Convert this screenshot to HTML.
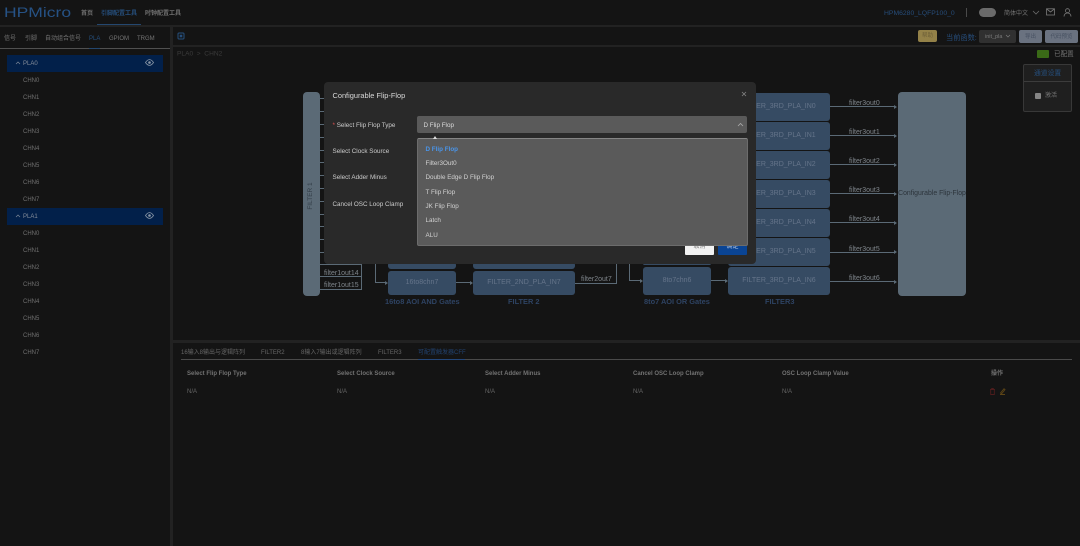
<!DOCTYPE html>
<html><head><meta charset="utf-8">
<style>
html,body{margin:0;padding:0;background:#141414;width:1080px;height:546px;overflow:hidden}
#r{position:relative;width:1080px;height:546px;overflow:hidden;background:#141414;font-family:"Liberation Sans","Noto Sans CJK SC",sans-serif;filter:blur(.35px)}
#r div,#r span.a{position:absolute;white-space:nowrap}
.t{line-height:10px;height:10px;margin-top:1px}
.g{color:#757575;font-size:6px}
.bar{background:#222}
.tree{left:23px;color:#707070;font-size:6px}
.blue{background:#364b63;border-radius:3px;color:#65748a;font-size:7px;text-align:center}
.gr{background:#5b6a76;border-radius:4px}
.ln{background:#5b6a76}
.out{color:#7e848a;font-size:7px;line-height:9px}
.ar{width:0;height:0;border-left:3px solid #5b6a76;border-top:2px solid transparent;border-bottom:2px solid transparent}
.hd{color:#727272;font-size:6px;font-weight:bold;top:368px}
.na{color:#666;font-size:6px;top:386px}
.it{left:425.5px;color:#d2d2d2;font-size:6.3px}
.lb{left:332.5px;color:#cccccc;font-size:6.3px}
.cap{color:#2e4363;font-size:7.4px;font-weight:bold}
</style></head><body><div id="r">
<!-- separators -->
<div class="bar" style="left:0;top:25px;width:1080px;height:2px"></div>
<div class="bar" style="left:170px;top:27px;width:3px;height:519px"></div>
<div class="bar" style="left:173px;top:45px;width:907px;height:2px"></div>
<div class="bar" style="left:173px;top:340px;width:907px;height:3px"></div>

<!-- header -->
<div style="left:4px;top:5px;font-size:14px;line-height:15px;height:15px;color:#265285;transform:scaleX(1.25);transform-origin:left center">HPMicro</div>
<div class="t g" style="left:81px;top:8px;font-weight:bold;color:#717171">首页</div>
<div class="t" style="left:101px;top:8px;font-size:6px;font-weight:bold;color:#264f7d">引脚配置工具</div>
<div style="left:97px;top:24px;width:44px;height:1px;background:#24476f"></div>
<div class="t g" style="left:145px;top:8px;font-weight:bold;color:#717171">时钟配置工具</div>
<div class="t" style="left:884px;top:7.5px;font-size:6.8px;color:#264c79">HPM6280_LQFP100_0</div>
<div style="left:966px;top:8px;width:1px;height:9px;background:#4a4a4a"></div>
<div style="left:979px;top:8px;width:17px;height:9px;border-radius:5px;background:#6a6a6a"></div>
<div class="t g" style="left:1004px;top:7.5px">简体中文</div>
<svg style="position:absolute;left:1032px;top:10px" width="8" height="6" viewBox="0 0 8 6"><path d="M1 1l3 3 3-3" fill="none" stroke="#6a6a6a" stroke-width=".8"/></svg>
<svg style="position:absolute;left:1046px;top:8px" width="9" height="8" viewBox="0 0 9 8"><rect x=".5" y=".8" width="8" height="6.2" fill="none" stroke="#7a7a7a" stroke-width=".8"/><path d="M.7 1l3.8 3 3.8-3" fill="none" stroke="#7a7a7a" stroke-width=".8"/></svg>
<svg style="position:absolute;left:1063px;top:8px" width="9" height="9" viewBox="0 0 9 9"><circle cx="4.5" cy="2.7" r="2" fill="none" stroke="#7a7a7a" stroke-width=".8"/><path d="M1 8.5c.3-2.5 1.6-3.5 3.5-3.5s3.2 1 3.5 3.5" fill="none" stroke="#7a7a7a" stroke-width=".8"/></svg>

<!-- left tabs -->
<div class="t g" style="left:4px;top:33px">信号</div>
<div class="t g" style="left:25px;top:33px">引脚</div>
<div class="t g" style="left:45px;top:33px">自动组合信号</div>
<div class="t" style="left:89px;top:33px;font-size:6px;color:#264f7d">PLA</div>
<div class="t g" style="left:109px;top:33px">GPIOM</div>
<div class="t g" style="left:137px;top:33px">TRGM</div>
<div style="left:0;top:48px;width:170px;height:1px;background:#505050"></div>
<div style="left:89px;top:48px;width:11px;height:1px;background:#24476f"></div>

<!-- tree -->
<div style="left:7px;top:55px;width:156px;height:17px;background:#02204a"></div>
<div class="t tree" style="top:58px;color:#858d9a">PLA0</div>
<svg style="position:absolute;left:15px;top:61px" width="6" height="4" viewBox="0 0 6 4"><path d="M1 3l2-2 2 2" fill="none" stroke="#7c8798" stroke-width=".7"/></svg>
<svg style="position:absolute;left:145px;top:59px" width="9" height="7" viewBox="0 0 9 7"><path d="M.5 3.5C2 1.2 3.2.6 4.5.6S7 1.2 8.5 3.5C7 5.8 5.8 6.4 4.5 6.4S2 5.8.5 3.5z" fill="none" stroke="#8b98a8" stroke-width=".8"/><circle cx="4.5" cy="3.5" r="1.3" fill="#8b98a8"/></svg>
<div class="t tree" style="top:75px">CHN0</div>
<div class="t tree" style="top:92px">CHN1</div>
<div class="t tree" style="top:109px">CHN2</div>
<div class="t tree" style="top:126px">CHN3</div>
<div class="t tree" style="top:143px">CHN4</div>
<div class="t tree" style="top:160px">CHN5</div>
<div class="t tree" style="top:177px">CHN6</div>
<div class="t tree" style="top:194px">CHN7</div>
<div style="left:7px;top:208px;width:156px;height:17px;background:#02204a"></div>
<div class="t tree" style="top:211px;color:#858d9a">PLA1</div>
<svg style="position:absolute;left:15px;top:214px" width="6" height="4" viewBox="0 0 6 4"><path d="M1 3l2-2 2 2" fill="none" stroke="#7c8798" stroke-width=".7"/></svg>
<svg style="position:absolute;left:145px;top:212px" width="9" height="7" viewBox="0 0 9 7"><path d="M.5 3.5C2 1.2 3.2.6 4.5.6S7 1.2 8.5 3.5C7 5.8 5.8 6.4 4.5 6.4S2 5.8.5 3.5z" fill="none" stroke="#8b98a8" stroke-width=".8"/><circle cx="4.5" cy="3.5" r="1.3" fill="#8b98a8"/></svg>
<div class="t tree" style="top:228px">CHN0</div>
<div class="t tree" style="top:245px">CHN1</div>
<div class="t tree" style="top:262px">CHN2</div>
<div class="t tree" style="top:279px">CHN3</div>
<div class="t tree" style="top:296px">CHN4</div>
<div class="t tree" style="top:313px">CHN5</div>
<div class="t tree" style="top:330px">CHN6</div>
<div class="t tree" style="top:347px">CHN7</div>

<!-- toolbar -->
<svg style="position:absolute;left:177px;top:32px" width="8" height="8" viewBox="0 0 8 8"><rect x="1" y="1" width="6" height="6" rx="1" fill="none" stroke="#264f7d"/><rect x="2.7" y="2.7" width="2.6" height="2.6" fill="#264f7d"/></svg>
<div style="left:918px;top:30px;width:19px;height:12px;border-radius:2px;background:#938148;color:#6e6038;font-size:5.5px;line-height:13px;text-align:center">帮助</div>
<div class="t" style="left:946px;top:31.5px;font-size:7.2px;color:#264c79">当前函数:</div>
<div style="left:979px;top:30px;width:37px;height:13px;border-radius:2px;background:#303030;color:#7a7a7a;font-size:5.5px;line-height:14px;text-indent:6px">init_pla</div>
<svg style="position:absolute;left:1005px;top:34px" width="6" height="4" viewBox="0 0 6 4"><path d="M1 1l2 2 2-2" fill="none" stroke="#7a7a7a" stroke-width=".7"/></svg>
<div style="left:1019px;top:30px;width:23px;height:13px;border-radius:2px;background:#6a7280;color:#465060;font-size:5.5px;line-height:14px;text-align:center">导出</div>
<div style="left:1045px;top:30px;width:33px;height:13px;border-radius:2px;background:#6a7280;color:#465060;font-size:5.5px;line-height:14px;text-align:center">代码预览</div>

<div class="t" style="left:177px;top:49px;margin-top:0;font-size:6.6px;color:#3b3b3b;transform:translateY(0.5px)">PLA0 &nbsp;&gt;&nbsp; CHN2</div>
<div style="left:1037px;top:50px;width:12px;height:8px;background:#3a6a17;border-radius:1px"></div>
<div class="t" style="left:1054px;top:48.5px;font-size:6.6px;color:#747474">已配置</div>

<div style="left:1023px;top:64px;width:47px;height:46px;background:#1f1f1f;border:1px solid #383838;border-radius:2px"></div>
<div style="left:1024px;top:81px;width:47px;height:1px;background:#3c3c3c"></div>
<div class="t" style="left:1034px;top:67.5px;font-size:6.8px;color:#264f7d">通道设置</div>
<div style="left:1035px;top:93px;width:6px;height:6px;background:#858585;border-radius:1px"></div>
<div class="t g" style="left:1045px;top:90px">激活</div>

<!-- diagram -->
<div class="gr" style="left:303px;top:92px;width:17px;height:204px"></div>
<div class="t" style="left:285px;top:190px;width:52px;text-align:center;font-size:6.5px;color:#333e48;transform:rotate(-90deg)">FILTER 1</div>
<div class="ln" style="left:320px;top:264px;width:41px;height:1px"></div>
<div class="ln" style="left:320px;top:276px;width:41px;height:1px"></div>
<div class="ln" style="left:320px;top:289px;width:41px;height:1px"></div>
<div class="ln" style="left:361px;top:264px;width:1px;height:26px"></div>
<div class="out" style="left:324px;top:268.5px">filter1out14</div>
<div class="out" style="left:324px;top:281px">filter1out15</div>
<div class="ln" style="left:375px;top:264px;width:1px;height:19px"></div>
<div class="ln" style="left:375px;top:282px;width:10px;height:1px"></div><div class="ar" style="left:385px;top:280.5px"></div>
<div class="blue" style="left:388px;top:262px;width:68px;height:7px"></div>
<div class="blue" style="left:388px;top:271px;width:68px;height:24px;line-height:24px">16to8chn7</div>
<div class="ln" style="left:456px;top:282px;width:15px;height:1px"></div><div class="ar" style="left:470px;top:280.5px"></div>
<div class="blue" style="left:473px;top:262px;width:102px;height:7px"></div>
<div class="blue" style="left:473px;top:271px;width:102px;height:24px;line-height:24px">FILTER_2ND_PLA_IN7</div>
<div class="ln" style="left:575px;top:283px;width:42px;height:1px"></div>
<div class="ln" style="left:616px;top:264px;width:1px;height:20px"></div>
<div class="out" style="left:581px;top:275px">filter2out7</div>
<div class="ln" style="left:629px;top:264px;width:1px;height:17px"></div>
<div class="ln" style="left:629px;top:280px;width:11px;height:1px"></div><div class="ar" style="left:640px;top:278.5px"></div>
<div class="blue" style="left:643px;top:262px;width:68px;height:3px"></div>
<div class="blue" style="left:643px;top:267px;width:68px;height:28px;line-height:28px">8to7chn6</div>
<div class="ln" style="left:711px;top:280px;width:15px;height:1px"></div><div class="ar" style="left:725px;top:278.5px"></div>

<div class="blue" style="left:728px;top:92.5px;width:102px;height:28px;line-height:28px">FILTER_3RD_PLA_IN0</div>
<div class="blue" style="left:728px;top:121.5px;width:102px;height:28px;line-height:28px">FILTER_3RD_PLA_IN1</div>
<div class="blue" style="left:728px;top:150.5px;width:102px;height:28px;line-height:28px">FILTER_3RD_PLA_IN2</div>
<div class="blue" style="left:728px;top:179.5px;width:102px;height:28px;line-height:28px">FILTER_3RD_PLA_IN3</div>
<div class="blue" style="left:728px;top:208.5px;width:102px;height:28px;line-height:28px">FILTER_3RD_PLA_IN4</div>
<div class="blue" style="left:728px;top:237.5px;width:102px;height:28px;line-height:28px">FILTER_3RD_PLA_IN5</div>
<div class="blue" style="left:728px;top:267px;width:102px;height:28px;line-height:28px">FILTER_3RD_PLA_IN6</div>

<div class="ln" style="left:830px;top:106px;width:65px;height:1.4px"></div><div class="ar" style="left:894px;top:104.7px"></div>
<div class="ln" style="left:830px;top:135px;width:65px;height:1.4px"></div><div class="ar" style="left:894px;top:133.7px"></div>
<div class="ln" style="left:830px;top:164px;width:65px;height:1.4px"></div><div class="ar" style="left:894px;top:162.7px"></div>
<div class="ln" style="left:830px;top:193px;width:65px;height:1.4px"></div><div class="ar" style="left:894px;top:191.7px"></div>
<div class="ln" style="left:830px;top:222px;width:65px;height:1.4px"></div><div class="ar" style="left:894px;top:220.7px"></div>
<div class="ln" style="left:830px;top:251.5px;width:65px;height:1.4px"></div><div class="ar" style="left:894px;top:250.2px"></div>
<div class="ln" style="left:830px;top:281px;width:65px;height:1.4px"></div><div class="ar" style="left:894px;top:279.7px"></div>
<div class="out" style="left:849px;top:98.5px">filter3out0</div>
<div class="out" style="left:849px;top:128px">filter3out1</div>
<div class="out" style="left:849px;top:157px">filter3out2</div>
<div class="out" style="left:849px;top:186px">filter3out3</div>
<div class="out" style="left:849px;top:215px">filter3out4</div>
<div class="out" style="left:849px;top:244.5px">filter3out5</div>
<div class="out" style="left:849px;top:274px">filter3out6</div>

<div class="gr" style="left:898px;top:92px;width:68px;height:204px"></div>
<div class="t" style="left:898px;top:187.5px;width:68px;text-align:center;font-size:6.9px;color:#2c343b">Configurable Flip-Flop</div>

<div class="t cap" style="left:385px;top:296px">16to8 AOI AND Gates</div>
<div class="t cap" style="left:508px;top:296px">FILTER 2</div>
<div class="t cap" style="left:644px;top:296px">8to7 AOI OR Gates</div>
<div class="t cap" style="left:765px;top:296px">FILTER3</div>

<!-- filter1 stubs -->
<div class="ln" style="left:320px;top:98px;width:4px;height:1px"></div>
<div class="ln" style="left:320px;top:111px;width:4px;height:1px"></div>
<div class="ln" style="left:320px;top:124px;width:4px;height:1px"></div>
<div class="ln" style="left:320px;top:137px;width:4px;height:1px"></div>
<div class="ln" style="left:320px;top:150px;width:4px;height:1px"></div>
<div class="ln" style="left:320px;top:162px;width:4px;height:1px"></div>
<div class="ln" style="left:320px;top:175px;width:4px;height:1px"></div>
<div class="ln" style="left:320px;top:188px;width:4px;height:1px"></div>
<div class="ln" style="left:320px;top:201px;width:4px;height:1px"></div>
<div class="ln" style="left:320px;top:214px;width:4px;height:1px"></div>
<div class="ln" style="left:320px;top:226px;width:4px;height:1px"></div>
<div class="ln" style="left:320px;top:239px;width:4px;height:1px"></div>
<div class="ln" style="left:320px;top:252px;width:4px;height:1px"></div>

<!-- bottom -->
<div class="t g" style="left:181px;top:346.5px;color:#666">16输入8输出与逻辑阵列</div>
<div class="t g" style="left:261px;top:346.5px;color:#666">FILTER2</div>
<div class="t g" style="left:301px;top:346.5px;color:#666">8输入7输出或逻辑阵列</div>
<div class="t g" style="left:378px;top:346.5px;color:#666">FILTER3</div>
<div class="t" style="left:418px;top:346.5px;font-size:6px;color:#22426f">可配置触发器CFF</div>
<div style="left:181px;top:359px;width:891px;height:1px;background:#4a4a4a"></div>
<div style="left:418px;top:359px;width:47px;height:1px;background:#24477a"></div>
<div class="t hd" style="left:187px">Select Flip Flop Type</div>
<div class="t hd" style="left:337px">Select Clock Source</div>
<div class="t hd" style="left:485px">Select Adder Minus</div>
<div class="t hd" style="left:633px">Cancel OSC Loop Clamp</div>
<div class="t hd" style="left:782px">OSC Loop Clamp Value</div>
<div class="t hd" style="left:991px">操作</div>
<div class="t na" style="left:187px">N/A</div>
<div class="t na" style="left:337px">N/A</div>
<div class="t na" style="left:485px">N/A</div>
<div class="t na" style="left:633px">N/A</div>
<div class="t na" style="left:782px">N/A</div>
<svg style="position:absolute;left:989px;top:388px" width="7" height="7" viewBox="0 0 7 7"><path d="M1 1.5h5M1.7 2v4.5h3.6V2M2.7 1.2V.5h1.6v.7" fill="none" stroke="#4e1c1c" stroke-width=".9"/></svg>
<svg style="position:absolute;left:999px;top:388px" width="7" height="7" viewBox="0 0 7 7"><path d="M1.5 5L5 .8l1 .8L2.6 5.8zM1 6.5h5" fill="none" stroke="#5c4416" stroke-width=".9"/></svg>

<!-- modal -->
<div style="left:324px;top:82px;width:432px;height:182px;border-radius:4px;background:#292929"></div>
<div class="t" style="left:332.5px;top:89.5px;font-size:7.4px;color:#d8d8d8">Configurable Flip-Flop</div>
<svg style="position:absolute;left:741px;top:91px" width="6" height="6" viewBox="0 0 6 6"><path d="M1 1l4 4M5 1L1 5" stroke="#858585" stroke-width=".8"/></svg>
<div class="t" style="left:332.5px;top:119.5px;font-size:6.3px;color:#cccccc"><span style="color:#e05050">*</span> Select Flip Flop Type</div>
<div class="t lb" style="top:146px">Select Clock Source</div>
<div class="t lb" style="top:172px">Select Adder Minus</div>
<div class="t lb" style="top:199px">Cancel OSC Loop Clamp</div>
<div style="left:417px;top:116px;width:330px;height:17px;border-radius:2px;background:#5a5a5a"></div>
<div class="t" style="left:423.5px;top:119.5px;font-size:6.3px;color:#dcdcdc">D Flip Flop</div>
<svg style="position:absolute;left:737px;top:122px" width="7" height="5" viewBox="0 0 7 5"><path d="M1 4l2.5-2.5L6 4" fill="none" stroke="#aaa" stroke-width=".8"/></svg>

<div style="left:685px;top:240px;width:29px;height:15px;border-radius:1px;background:#f2f2f2;color:#777;font-size:6px;line-height:14px;text-align:center">取消</div>
<div style="left:718px;top:240px;width:29px;height:15px;border-radius:1px;background:#0a4494;color:#b8c8de;font-size:6px;line-height:14px;text-align:center">确定</div>

<div style="left:417px;top:138px;width:329px;height:106px;border:1px solid #6c6c6c;border-top-color:#858585;border-radius:2px;background:#5a5a5a"></div>
<div style="left:432.5px;top:136px;width:0;height:0;border-left:2.5px solid transparent;border-right:2.5px solid transparent;border-bottom:3px solid #ddd"></div>
<div class="t it" style="top:143.5px;color:#4a95ea;font-weight:bold">D Flip Flop</div>
<div class="t it" style="top:157.5px">Filter3Out0</div>
<div class="t it" style="top:172px">Double Edge D Flip Flop</div>
<div class="t it" style="top:186.5px">T Flip Flop</div>
<div class="t it" style="top:200.5px">JK Flip Flop</div>
<div class="t it" style="top:215px">Latch</div>
<div class="t it" style="top:229.5px">ALU</div>
</div></body></html>
